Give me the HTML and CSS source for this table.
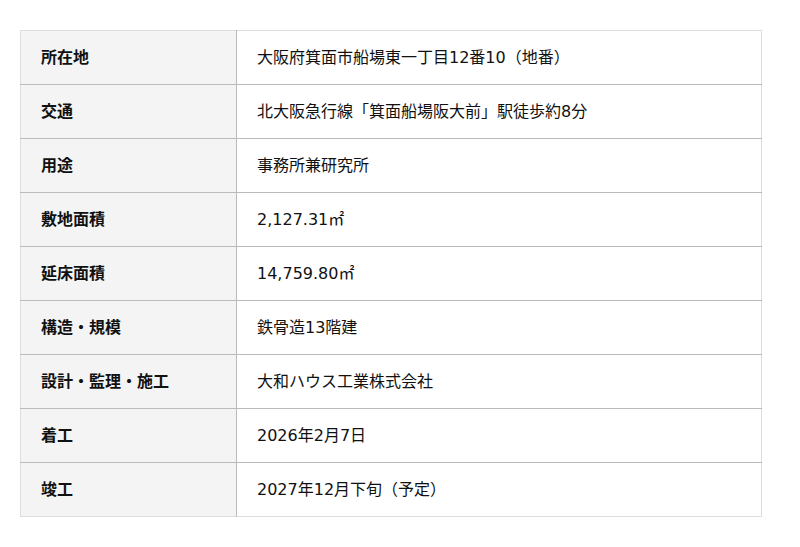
FILE: index.html
```html
<!DOCTYPE html>
<html lang="ja">
<head>
<meta charset="utf-8">
<link rel="stylesheet" href="styles.css">
</head>
<body>
<div class="wrap">
<table class="spec">
<tr><th>所在地</th><td>大阪府箕面市船場東一丁目12番10（地番）</td></tr>
<tr><th>交通</th><td>北大阪急行線「箕面船場阪大前」駅徒歩約8分</td></tr>
<tr><th>用途</th><td>事務所兼研究所</td></tr>
<tr><th>敷地面積</th><td>2,127.31㎡</td></tr>
<tr><th>延床面積</th><td>14,759.80㎡</td></tr>
<tr><th>構造・規模</th><td>鉄骨造13階建</td></tr>
<tr><th>設計・監理・施工</th><td>大和ハウス工業株式会社</td></tr>
<tr><th>着工</th><td>2026年2月7日</td></tr>
<tr><th>竣工</th><td>2027年12月下旬（予定）</td></tr>
</table>
</div>
</body>
</html>
```
FILE: styles.css
```css
html, body {
  margin: 0;
  padding: 0;
  background: #fff;
}
.wrap {
  padding: 30px 20px;
}
.spec {
  width: 742px;
  border-collapse: collapse;
  border: 1px solid #dddddd;
  font-family: "DejaVu Sans", "Noto Sans CJK JP", sans-serif;
  font-size: 16px;
  line-height: 20px;
  color: #111;
}
.spec tr {
  height: 54px;
}
.spec th, .spec td {
  padding: 0 20px;
  text-align: left;
  vertical-align: middle;
  border-top: 1px solid #bbbbbb;
}
.spec tr:first-child th, .spec tr:first-child td {
  border-top: 1px solid #dddddd;
}
.spec th {
  width: 175px;
  padding-bottom: 4px;
  background: #f4f4f4;
  font-family: "Noto Sans CJK JP", sans-serif;
  font-weight: 700;
  border-right: 1px solid #bbbbbb;
}
```
